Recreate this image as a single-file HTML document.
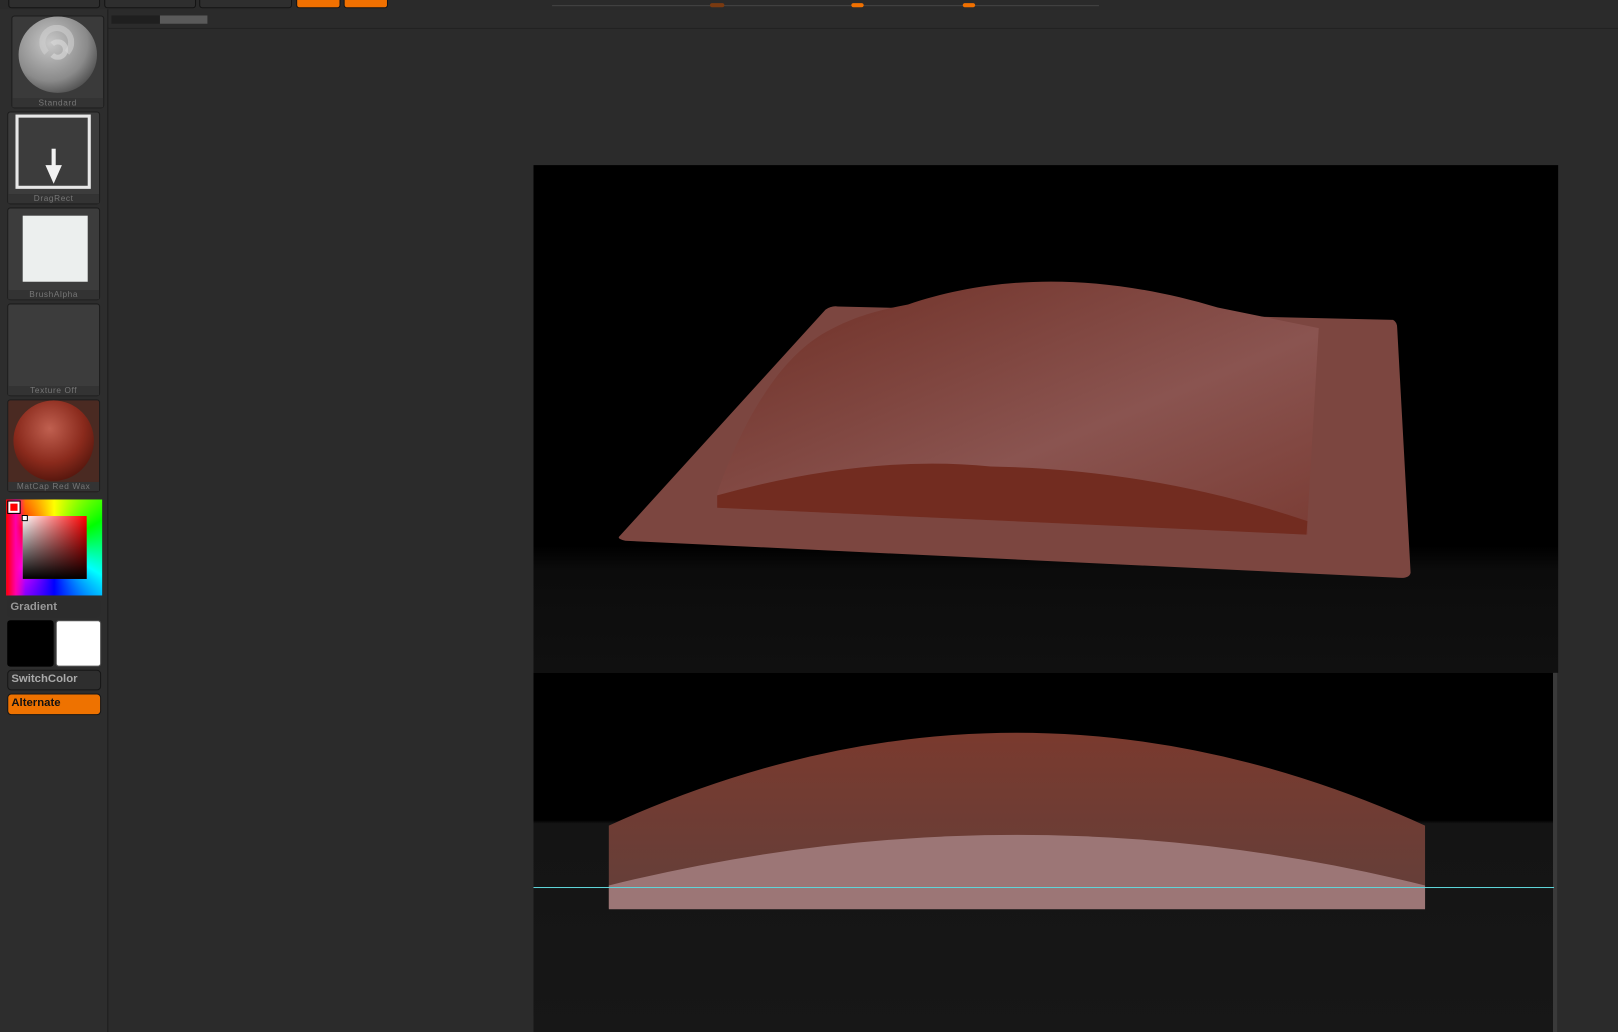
<!DOCTYPE html>
<html><head><style>
html,body{margin:0;padding:0;width:1618px;height:1032px;overflow:hidden;background:#2b2b2b;font-family:"Liberation Sans",sans-serif}
#w{position:absolute;left:0;top:0;width:1568px;height:1000px;transform:scale(1.0319,1.032);transform-origin:0 0}
.a{position:absolute;box-sizing:border-box}
.tile{background:#3c3c3c;border:1px solid #1c1c1c;border-radius:3px}
.lab{position:absolute;left:0;right:0;bottom:0;height:9px;background:#333;color:#777;font-size:8px;line-height:9px;text-align:center;letter-spacing:0.6px}
.btn{background:#2e2e2e;border:1px solid #161616;border-radius:4px;color:#aaa;font-size:11px;font-weight:bold;padding-left:3px;line-height:17px}
</style></head><body><div id="w">
<div class="a" style="left:0;top:0;width:1568px;height:9px;background:#2a2a2a"></div>
<div class="a" style="left:8px;top:-4px;width:89px;height:12px;background:#2e2e2e;border:1px solid #141414;border-radius:3px"></div>
<div class="a" style="left:101px;top:-4px;width:89px;height:12px;background:#2e2e2e;border:1px solid #141414;border-radius:3px"></div>
<div class="a" style="left:193px;top:-4px;width:90px;height:12px;background:#2e2e2e;border:1px solid #141414;border-radius:3px"></div>
<div class="a" style="left:287px;top:-4px;width:43px;height:12px;background:#f07000;border:1px solid #141414;border-radius:3px"></div>
<div class="a" style="left:333px;top:-4px;width:43px;height:12px;background:#f07000;border:1px solid #141414;border-radius:3px"></div>
<div class="a" style="left:535px;top:5px;width:530px;height:1px;background:#444"></div>
<div class="a" style="left:688px;top:3px;width:14px;height:4px;background:#7a3a10;border-radius:2px"></div>
<div class="a" style="left:825px;top:3px;width:12px;height:4px;background:#f07000;border-radius:2px"></div>
<div class="a" style="left:933px;top:3px;width:12px;height:4px;background:#f07000;border-radius:2px"></div>
<div class="a" style="left:0;top:9px;width:105px;height:991px;background:#2d2d2d;border-right:1px solid #1c1c1c"></div>
<div class="a" style="left:105px;top:27px;width:1463px;height:1px;background:#222"></div>
<div class="a" style="left:108px;top:15px;width:47px;height:8px;background:#1f1f1f"></div>
<div class="a" style="left:155px;top:15px;width:46px;height:8px;background:#5a5a5a"></div>

<div class="a tile" style="left:11px;top:15px;width:90px;height:90px;background:#3a3a3a">
 <div class="a" style="left:6px;top:0;width:76px;height:74px;border-radius:50%;background:radial-gradient(circle at 40% 35%,#c8c8c8,#8a8a8a 55%,#4a4a4a 80%,#3a3a3a)"></div>
 <div class="a" style="left:26px;top:8px;width:34px;height:34px;border-radius:50%;border:6px solid #d0d0d0;border-bottom-color:transparent;opacity:.6"></div>
 <div class="a" style="left:34px;top:22px;width:20px;height:20px;border-radius:50%;border:5px solid #dcdcdc;border-left-color:transparent;opacity:.6"></div>
 <div class="lab">Standard</div></div>
<div class="a tile" style="left:7px;top:108px;width:90px;height:90px">
 <div class="a" style="left:7px;top:2px;width:73px;height:72px;border:3px solid #e8e8e8"></div>
 <svg class="a" style="left:34px;top:35px" width="20" height="34"><path d="M8 0h4v16h6L10 34 2 16h6z" fill="#f2f2f2"/></svg>
 <div class="lab">DragRect</div></div>
<div class="a tile" style="left:7px;top:201px;width:90px;height:90px">
 <div class="a" style="left:14px;top:7px;width:63px;height:64px;background:#ecefee"></div>
 <div class="lab">BrushAlpha</div></div>
<div class="a tile" style="left:7px;top:294px;width:90px;height:90px">
 <div class="lab">Texture Off</div></div>
<div class="a tile" style="left:7px;top:387px;width:90px;height:90px;background:#4a2a22">
 <div class="a" style="left:5px;top:0;width:78px;height:78px;border-radius:50%;background:radial-gradient(circle at 45% 35%,#c06050,#8a2a1c 50%,#4a120a 85%)"></div>
 <div class="lab">MatCap Red Wax</div></div>
<div class="a" style="left:6px;top:484px;width:93px;height:93px;background:conic-gradient(from 180deg at 50% 50%,#00f,#f0f,#f00,#ff0 ,#0f0 ,#0ff,#00f)"></div>
<div class="a" style="left:6px;top:484px;width:93px;height:93px;background:linear-gradient(90deg,#f00 0,#f0a 10%,transparent 20%)"></div>
<div class="a" style="left:22px;top:500px;width:62px;height:61px;background:linear-gradient(180deg,transparent,#000),linear-gradient(90deg,#fff,#f00)"></div>
<div class="a" style="left:8px;top:486px;width:11px;height:11px;background:#f00;border:2px solid #fff;outline:1px solid #000"></div>
<div class="a" style="left:21px;top:499px;width:6px;height:6px;background:#fff;border:1px solid #000"></div>
<div class="a" style="left:7px;top:580px;width:90px;height:18px;color:#999;font-size:11px;font-weight:bold;padding-left:3px;line-height:16px;border-radius:3px;background:#2c2c2c">Gradient</div>
<div class="a" style="left:7px;top:601px;width:45px;height:45px;background:#000;border-radius:3px"></div>
<div class="a" style="left:54px;top:601px;width:44px;height:45px;background:#fff;border:1px solid #555;border-radius:3px"></div>
<div class="a btn" style="left:7px;top:649px;width:91px;height:20px">SwitchColor</div>
<div class="a btn" style="left:7px;top:672px;width:91px;height:21px;background:#ee7200;color:#111">Alternate</div>
<div class="a" style="left:517px;top:160px;width:993px;height:492px;background:linear-gradient(180deg,#000 0,#000 75%,#0c0c0c 80%,#101010 100%)"></div>
<div class="a" style="left:517px;top:652px;width:989px;height:348px;background:linear-gradient(180deg,#000 0,#000 41%,#141414 42%,#171717 100%)"></div>
<div class="a" style="left:1505px;top:652px;width:4px;height:348px;background:#3a3a3a"></div>
<svg class="a" style="left:0;top:0" width="1568" height="1000">
<defs>
<linearGradient id="g1" x1="0" y1="0" x2="1" y2="1"><stop offset="0" stop-color="#6e2e24"/><stop offset=".6" stop-color="#8a5450"/><stop offset="1" stop-color="#7a3c34"/></linearGradient>
<linearGradient id="g2" x1="0" y1="0" x2="0" y2="1"><stop offset="0" stop-color="#7a3a2e"/><stop offset="1" stop-color="#633f3a"/></linearGradient>
</defs>
<path d="M600 520L800 300Q806 296 812 297L1350 310Q1354 312 1354 318L1367 555Q1366 560 1358 560L606 524Q598 522 600 520Z" fill="#7c4640"/>
<path d="M695 478C715 420 750 350 800 322C830 305 855 300 880 295C960 268 1060 262 1180 298L1278 318L1267 505L1267 518L695 492Z" fill="url(#g1)"/>
<path d="M695 480Q840 440 960 452Q1120 455 1267 505L1266 518L695 492Z" fill="#722c20"/>
<path d="M590 800Q985 620 1381 800L1381 880L590 880Z" fill="url(#g2)"/>
<path d="M590 858Q985 760 1381 858L1381 881L590 881Z" fill="#9c7676"/>
<rect x="517" y="859.5" width="989" height="1" fill="#5fd4d8"/>
</svg>
</div></body></html>
